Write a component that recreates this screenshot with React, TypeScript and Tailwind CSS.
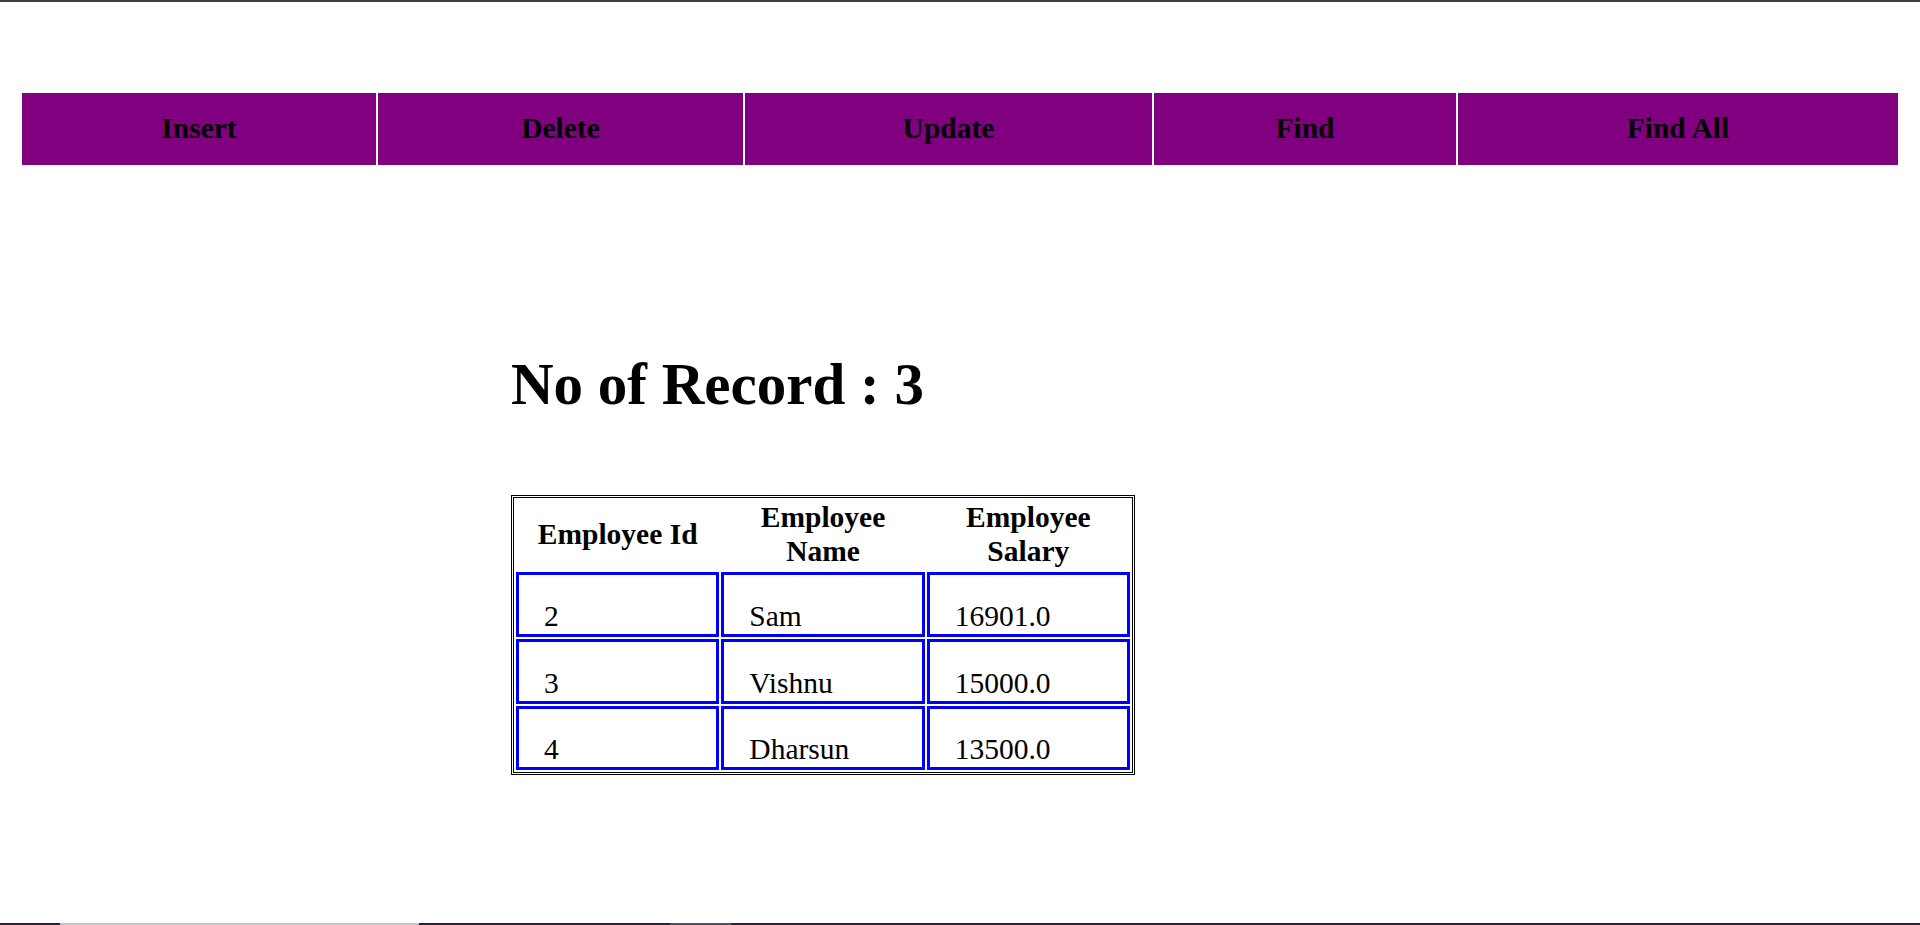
import React from "react";

const navItems = [
  { label: "Insert", w: "w-[354px]" },
  { label: "Delete", w: "w-[365px]" },
  { label: "Update", w: "w-[407px]" },
  { label: "Find", w: "w-[302px]" },
  { label: "Find All", w: "flex-1" },
];

const rows = [
  { id: "2", name: "Sam", salary: "16901.0", h: "h-[65px]" },
  { id: "3", name: "Vishnu", salary: "15000.0", h: "h-[65px]" },
  { id: "4", name: "Dharsun", salary: "13500.0", h: "h-[64px]" },
];

export default function App() {
  return (
    <div className="w-full h-[925px] flex flex-col bg-white text-black font-['Liberation_Serif','Times_New_Roman',serif] overflow-hidden">
      <div className="h-[2px] bg-[#3b4232]" />

      <div className="mt-[91px] px-[22px] flex gap-[2px] h-[72px]">
        {navItems.map((n) => (
          <div
            key={n.label}
            className={`${n.w} bg-[#800080] flex items-center justify-center text-[29.5px] font-bold leading-[1.15]`}
          >
            {n.label}
          </div>
        ))}
      </div>

      <h1 className="mt-[186px] ml-[511px] text-[59px] font-bold leading-[1.15]">
        No of Record : 3
      </h1>

      <div className="mt-[76px] ml-[511px]">
        <table className="w-[624px] table-fixed border-separate border-spacing-[2px] border-[3px] border-double border-black text-[29.5px] leading-[1.15]">
          <thead>
            <tr className="h-[70px]">
              <th className="font-bold text-center align-middle px-px">Employee Id</th>
              <th className="font-bold text-center align-middle px-px">Employee Name</th>
              <th className="font-bold text-center align-middle px-px">Employee Salary</th>
            </tr>
          </thead>
          <tbody>
            {rows.map((r) => (
              <tr key={r.id} className={r.h}>
                <td className="border-[3px] border-[#0000ff] align-bottom pl-[25px] font-normal">{r.id}</td>
                <td className="border-[3px] border-[#0000ff] align-bottom pl-[25px] font-normal">{r.name}</td>
                <td className="border-[3px] border-[#0000ff] align-bottom pl-[25px] font-normal">{r.salary}</td>
              </tr>
            ))}
          </tbody>
        </table>
      </div>

      <div className="mt-auto h-[2px] flex">
        <div className="w-[60px] bg-[#2b2136]" />
        <div className="w-[359px] bg-[#c4c4c4]" />
        <div className="w-[251px] bg-[#2b2136]" />
        <div className="w-[61px] bg-[#554d60]" />
        <div className="flex-1 bg-[#2b2136]" />
      </div>
    </div>
  );
}
